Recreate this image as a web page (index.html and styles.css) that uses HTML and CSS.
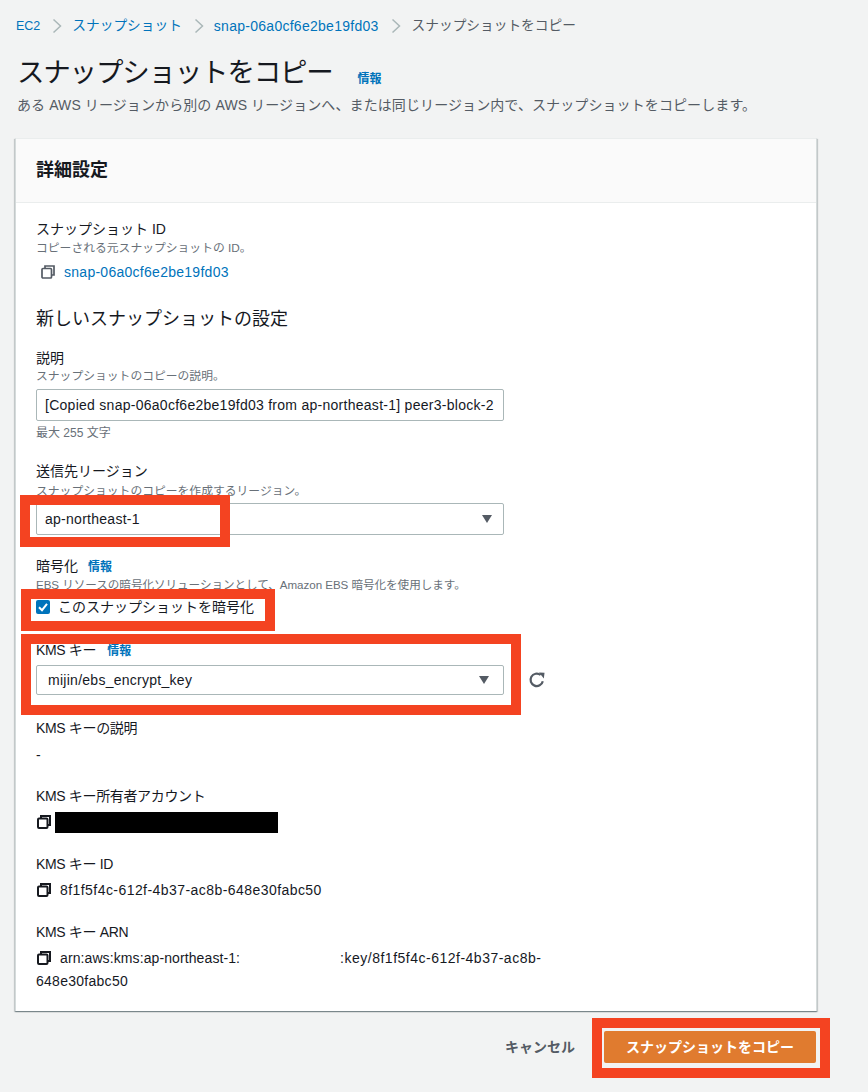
FILE: index.html
```html
<!DOCTYPE html>
<html lang="ja">
<head>
<meta charset="utf-8">
<title>スナップショットをコピー</title>
<link rel="stylesheet" href="styles.css">
</head>
<body>
<div class="page">
  <nav class="crumbs">
    <a class="link crumb-root">EC2</a>
    <svg class="chev" viewBox="0 0 10 16"><path d="M1.5 1.5 8.5 8l-7 6.5"/></svg>
    <a class="link crumb-ja">スナップショット</a>
    <svg class="chev" viewBox="0 0 10 16"><path d="M1.5 1.5 8.5 8l-7 6.5"/></svg>
    <a class="link latin">snap-06a0cf6e2be19fd03</a>
    <svg class="chev" viewBox="0 0 10 16"><path d="M1.5 1.5 8.5 8l-7 6.5"/></svg>
    <span class="crumb-current crumb-ja">スナップショットをコピー</span>
  </nav>
  <div class="title-row">
    <h1 class="title">スナップショットをコピー</h1>
    <a class="link info">情報</a>
  </div>
  <p class="lead">ある AWS リージョンから別の AWS リージョンへ、または同じリージョン内で、スナップショットをコピーします。</p>

  <section class="card">
    <header class="card-head"><h2 class="card-title">詳細設定</h2></header>
    <div class="card-body">
      <div class="label">スナップショット ID</div>
      <div class="desc desc-first">コピーされる元スナップショットの ID。</div>
      <div class="value snap-value">
        <svg class="copy" viewBox="0 0 14 14"><path d="M4 3.5V1h9v9h-2.5"/><rect x="1" y="3.5" width="9.5" height="9.5" rx="1"/></svg>
        <a class="link latin">snap-06a0cf6e2be19fd03</a>
      </div>

      <h3 class="subhead">新しいスナップショットの設定</h3>

      <div class="label after-head">説明</div>
      <div class="desc desc-flush">スナップショットのコピーの説明。</div>
      <div class="input input-desc latin">[Copied snap-06a0cf6e2be19fd03 from ap-northeast-1] peer3-block-2</div>
      <div class="hint">最大 255 文字</div>

      <div class="label after-input">送信先リージョン</div>
      <div class="desc desc-tight">スナップショットのコピーを作成するリージョン。</div>
      <div class="input select latin"><span>ap-northeast-1</span><i class="caret"></i></div>

      <div class="label after-select">暗号化<a class="link info info-gap">情報</a></div>
      <div class="desc desc-ebs">EBS リソースの暗号化ソリューションとして、Amazon EBS 暗号化を使用します。</div>
      <label class="check-row">
        <span class="check"><svg viewBox="0 0 14 14"><path d="M3 7.2 6 10.2 11 3.8"/></svg></span>
        このスナップショットを暗号化
      </label>

      <div class="label kms after-check">KMS キー<a class="link info info-gap">情報</a></div>
      <div class="select-row">
        <div class="input select select-kms latin"><span>mijin/ebs_encrypt_key</span><i class="caret"></i></div>
        <svg class="refresh" viewBox="0 0 18 18"><path d="M14.8 10.2A6.2 6.2 0 1 1 12.6 4"/><path class="fill" d="M11 1.5 16.5 1.8 15.8 7.4Z"/></svg>
      </div>

      <div class="label kms after-check">KMS キーの説明</div>
      <div class="value plain-value">-</div>

      <div class="label kms after-value">KMS キー所有者アカウント</div>
      <div class="value detail-value">
        <svg class="copy dark" viewBox="0 0 14 14"><path d="M4 3.5V1h9v9h-2.5"/><rect x="1" y="3.5" width="9.5" height="9.5" rx="1"/></svg>
        <span class="redact-black"></span>
      </div>

      <div class="label kms after-detail">KMS キー ID</div>
      <div class="value detail-value">
        <svg class="copy dark" viewBox="0 0 14 14"><path d="M4 3.5V1h9v9h-2.5"/><rect x="1" y="3.5" width="9.5" height="9.5" rx="1"/></svg>
        <span class="key-id">8f1f5f4c-612f-4b37-ac8b-648e30fabc50</span>
      </div>

      <div class="label kms after-detail">KMS キー ARN</div>
      <div class="arn">
        <svg class="copy dark" viewBox="0 0 14 14"><path d="M4 3.5V1h9v9h-2.5"/><rect x="1" y="3.5" width="9.5" height="9.5" rx="1"/></svg><span class="arn-head">arn:aws:kms:ap-northeast-1:</span><span class="redact-white"></span><span class="arn-key">:key/8f1f5f4c-612f-4b37-ac8b-</span><span class="latin">648e30fabc50</span>
      </div>
    </div>
  </section>

  <footer class="actions">
    <span class="cancel">キャンセル</span>
    <button class="primary">スナップショットをコピー</button>
  </footer>

  <div class="mark mark-region"></div>
  <div class="mark mark-check"></div>
  <div class="mark mark-kms"></div>
  <div class="mark mark-submit"></div>
</div>
</body>
</html>
```

FILE: styles.css
```css
* { box-sizing: border-box; }
html, body { margin: 0; padding: 0; }
body {
  background: #f2f3f3;
  color: #16191f;
  font-family: "Liberation Sans", "Noto Sans CJK JP", sans-serif;
  font-size: 14px;
  line-height: 20px;
}
.page { position: relative; width: 868px; height: 1092px; padding: 16px 51px 0 15px; overflow: hidden; }
.link { color: #0073bb; text-decoration: none; }
.latin { letter-spacing: .27px; }

.crumbs { display: flex; align-items: center; height: 20px; line-height: 20px; padding-left: 1px; }
.crumb-root { font-size: 12.5px; }
.crumb-ja { font-size: 13.7px; }
.chev { width: 10px; height: 16px; margin: 0 10px 0 12px; fill: none; stroke: #aab7b8; stroke-width: 1.5; }
.crumb-current { color: #545b64; margin-left: 1px; }

.title-row { display: flex; align-items: flex-end; margin-top: 16px; height: 42px; padding-left: 2px; }
.title { margin: 0; font-size: 27.5px; letter-spacing: -1.2px; line-height: 42px; font-weight: 400; color: #16191f; }
.info { font-size: 12px; font-weight: 700; line-height: 16px; letter-spacing: 0; }
.title-row .info { margin: 0 0 7px 25px; }
.info-gap { margin-left: 10px; }
.lead { margin: 1px 0 0 2px; color: #545b64; line-height: 20px; letter-spacing: .1px; }

.card {
  margin-top: 23px;
  background: #fff;
  border-left: 1px solid #d5dbdb;
  border-right: 1px solid #d5dbdb;
  box-shadow: 0 1px 1px 0 rgba(0, 28, 36, .3), 1px 1px 1px 0 rgba(0, 28, 36, .15), -1px 1px 1px 0 rgba(0, 28, 36, .15);
  border-top: 1px solid #eaeded;
}
.card-head { height: 64px; background: #fafafa; border-bottom: 1px solid #eaeded; display: flex; align-items: center; padding: 0 0 2px 20px; }
.card-title { margin: 0; font-size: 18px; line-height: 24px; font-weight: 700; }
.card-body { padding: 16px 20px 18px; }

.label { height: 20px; line-height: 20px; color: #16191f; }
.kms { letter-spacing: -.35px; }
.kms .info { margin-left: 11px; }
.desc { margin-top: 1px; font-size: 11.8px; line-height: 16px; color: #687078; }
.desc-first { margin-top: 1px; }
.desc-flush { margin-top: 0; }
.desc-tight { margin-top: 2px; }
.desc-ebs { font-size: 11.6px; letter-spacing: -.05px; }
.value { display: flex; align-items: center; height: 20px; }
.snap-value { margin-top: 6px; padding-left: 5px; }
.snap-value .link { margin-left: 9px; }
.plain-value { margin-top: 7px; }
.detail-value { margin-top: 6px; }
.key-id { margin-left: 9px; letter-spacing: .44px; }
.copy { width: 14px; height: 14px; flex: none; fill: none; stroke: #545b64; stroke-width: 1.7; }
.copy.dark { stroke: #16191f; stroke-width: 2; margin-left: 1px; }

.subhead { margin: 25px 0 0; font-size: 18px; line-height: 24px; font-weight: 400; color: #16191f; }
.after-head { margin-top: 17px; }
.after-input { margin-top: 20px; }
.after-select { margin-top: 21px; }
.after-check { margin-top: 23px; }
.after-value { margin-top: 21px; }
.after-detail { margin-top: 22px; }

.input {
  width: 468px;
  height: 32px;
  margin-top: 4px;
  padding: 0 8px;
  display: flex;
  align-items: center;
  background: #fff;
  border: 1px solid #aab7b8;
  border-radius: 2px;
  color: #16191f;
  white-space: nowrap;
  overflow: hidden;
}
.input-desc { margin-top: 5px; }
.hint { margin-top: 4px; font-size: 12px; line-height: 16px; color: #687078; }
.select { justify-content: space-between; padding-right: 11px; }
.caret { width: 0; height: 0; border-left: 5.5px solid transparent; border-right: 5.5px solid transparent; border-top: 8px solid #545b64; }

.check-row { display: flex; align-items: center; height: 20px; margin-top: 4px; }
.check { width: 14px; height: 14px; margin-right: 8px; border-radius: 2px; background: #0073bb; display: flex; }
.check svg { width: 14px; height: 14px; fill: none; stroke: #fff; stroke-width: 2; }

.select-row { display: flex; align-items: center; margin-top: 5px; }
.select-kms { margin-top: 0; height: 30px; padding-left: 11px; padding-right: 14px; }
.refresh { width: 18px; height: 18px; margin-left: 24px; fill: none; stroke: #545b64; stroke-width: 2.2; }
.refresh .fill { fill: #545b64; stroke: none; }

.redact-black { display: block; width: 223px; height: 21px; background: #000; margin-left: 4px; }
.arn { margin-top: 1px; width: 510px; line-height: 23px; color: #16191f; }
.arn .copy { vertical-align: -2px; margin-right: 9px; }
.arn-head { letter-spacing: .1px; }
.arn-key { letter-spacing: .5px; }
.redact-white { display: inline-block; width: 100px; height: 20px; background: #fff; }

.actions { display: flex; justify-content: flex-end; align-items: center; gap: 29px; margin-top: 20px; padding-right: 1px; }
.cancel { font-weight: 700; color: #545b64; }
.primary {
  width: 212px;
  height: 32px;
  border: 0;
  border-radius: 2px;
  background: #e07b2f;
  color: #fff;
  font: 700 14px/20px "Liberation Sans", "Noto Sans CJK JP", sans-serif;
  padding: 0;
}

.mark { position: absolute; border: 10px solid #f44321; }
.mark-region { left: 20px; top: 495px; width: 210px; height: 52px; }
.mark-check { left: 21px; top: 589px; width: 254px; height: 42px; }
.mark-kms { left: 21px; top: 634px; width: 500px; height: 81px; }
.mark-submit { left: 592px; top: 1018px; width: 238px; height: 60px; }
```
